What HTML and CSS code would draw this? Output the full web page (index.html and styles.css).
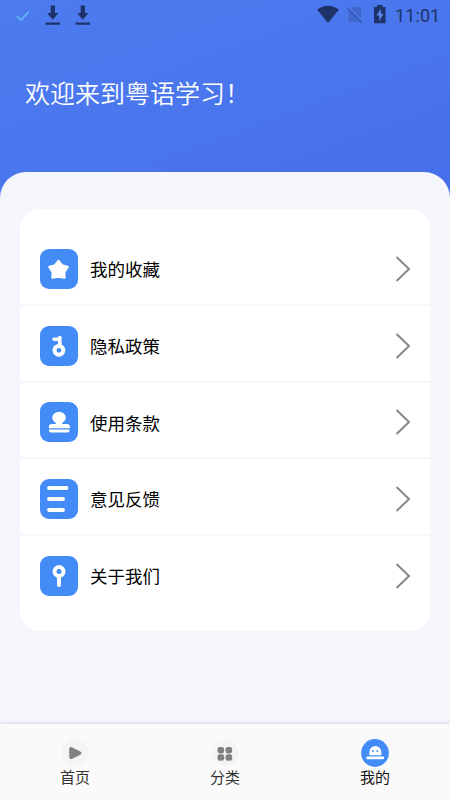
FILE: index.html
```html
<!DOCTYPE html>
<html lang="zh-CN">
<head>
<meta charset="utf-8">
<title>我的</title>
<link rel="stylesheet" href="styles.css">
</head>
<body>
<div class="app">
  <header class="hero">
    <div class="status">
      <svg class="status-left" width="100" height="30" viewBox="0 0 100 30">
        <path d="M17 16l4 4 8-8.500" fill="none" stroke="#62b8f5" stroke-width="1.700"/>
        <g fill="#1c3269">
          <path d="M50.700 5.500h4.300v7.500h3.500l-5.700 6.800-5.600-6.800h3.500zM45.500 22.500h14.500v2.200h-14.500z"/>
          <path d="M80.700 5.500h4.300v7.500h3.500l-5.700 6.800-5.600-6.800h3.500zM75.500 22.500h14.500v2.200h-14.500z"/>
        </g>
      </svg>
      <svg class="status-right" width="76" height="30" viewBox="314 0 76 30">
        <path d="M317 9.500Q328 1.800 339 9.500L328 23z" fill="#1c3269"/>
        <path d="M352.500 7H361v15H348.500V11z" fill="#3f66cb"/>
        <path d="M348.500 7l14 14" stroke="#4d7aee" stroke-width="1.500"/>
        <path d="M347 8l15 15" stroke="#3559b5" stroke-width="1.300"/>
        <path d="M374 7h3V5h5.500v2h3v16.300H374z" fill="#1c3269"/>
        <path d="M381 8.500l-4.500 7h2.700v5.500l4.300-7.300h-2.700z" fill="#5c86ee"/>
      </svg>
      <span class="clock">11:01</span>
    </div>
    <h1 class="greeting">欢迎来到粤语学习！</h1>
  </header>
  <main class="sheet">
    <ul class="menu">
      <li class="row">
        <svg class="icon" viewBox="0 0 38 40"><path d="M18.500 12l3.300 4.300 5.700 1.700-3.300 5 .3 5.500-6-1-6 1 .3-5.500-3.300-5 5.700-1.700z" fill="#fff" stroke="#fff" stroke-width="2.400" stroke-linejoin="round"/></svg>
        <span class="label">我的收藏</span>
        <svg class="chevron" viewBox="0 0 16 26"><path d="M1.500 1l12.500 12L1.500 25"/></svg>
      </li>
      <li class="row">
        <svg class="icon" viewBox="0 0 38 40"><g fill="none" stroke="#fff"><circle cx="18.900" cy="24.300" r="4.400" stroke-width="4"/><path d="M19.800 20v-8.500M20 13.300h-6" stroke-width="3.600" stroke-linecap="round"/></g></svg>
        <span class="label">隐私政策</span>
        <svg class="chevron" viewBox="0 0 16 26"><path d="M1.500 1l12.500 12L1.500 25"/></svg>
      </li>
      <li class="row">
        <svg class="icon" viewBox="0 0 38 40"><path d="M16 22c0-2-3.800-2.500-3.800-6.500a6.800 5.800 0 0 1 13.600 0c0 4-3.800 4.500-3.800 6.500h5a3 3 0 0 1 3 3v1.300H8.800V25a3 3 0 0 1 3-3zM9 27.500h20.500v1q0 2-2 2H11q-2 0-2-2z" fill="#fff"/></svg>
        <span class="label">使用条款</span>
        <svg class="chevron" viewBox="0 0 16 26"><path d="M1.500 1l12.500 12L1.500 25"/></svg>
      </li>
      <li class="row">
        <svg class="icon" viewBox="0 0 38 40"><path d="M9 9h17.500M9 20h14M9 31h14" stroke="#fff" stroke-width="3.900" stroke-linecap="round"/></svg>
        <span class="label">意见反馈</span>
        <svg class="chevron" viewBox="0 0 16 26"><path d="M1.500 1l12.500 12L1.500 25"/></svg>
      </li>
      <li class="row">
        <svg class="icon" viewBox="0 0 38 40"><g fill="none" stroke="#fff"><circle cx="19" cy="15.500" r="4.500" stroke-width="4"/><path d="M19 20v9" stroke-width="4" stroke-linecap="round"/></g></svg>
        <span class="label">关于我们</span>
        <svg class="chevron" viewBox="0 0 16 26"><path d="M1.500 1l12.500 12L1.500 25"/></svg>
      </li>
    </ul>
  </main>
  <nav class="tabs">
    <a class="tab">
      <svg width="28" height="28" viewBox="0 0 28 28"><circle cx="14" cy="14" r="13.500" fill="#f5f5f5"/><path d="M10 9.800v8.500l8.500-4.200z" fill="#808080" stroke="#808080" stroke-width="3.600" stroke-linejoin="round"/></svg>
      <span>首页</span>
    </a>
    <a class="tab">
      <svg width="28" height="28" viewBox="0 0 28 28"><circle cx="14" cy="14" r="13.500" fill="#f5f5f5"/><g fill="#808080"><rect x="6.500" y="8" width="6.700" height="6.500" rx="2.400"/><rect x="14.500" y="8" width="6.700" height="6.500" rx="2.400"/><rect x="6.500" y="15.300" width="6.700" height="6.500" rx="2.400"/><rect x="14.500" y="15.300" width="6.700" height="6.500" rx="2.400"/></g></svg>
      <span>分类</span>
    </a>
    <a class="tab active">
      <svg width="28" height="28" viewBox="0 0 28 28"><circle cx="14" cy="14" r="13.900" fill="#438cf7"/><path d="M8.300 16.200V13a6 5.900 0 0 1 12 0v3.200z" fill="#fff"/><rect x="5.300" y="17.500" width="17.800" height="2.800" rx="1.200" fill="#fff"/><circle cx="12" cy="12" r="1" fill="#438cf7"/><circle cx="16.300" cy="12" r="1" fill="#438cf7"/></svg>
      <span>我的</span>
    </a>
  </nav>
</div>
</body>
</html>
```
FILE: styles.css
```css
* { box-sizing: border-box; }

body {
  margin: 0;
  font-family: "Noto Sans CJK SC", sans-serif;
}

.app {
  display: flex;
  flex-direction: column;
  width: 450px;
  height: 800px;
  overflow: hidden;
  background: #f4f6fc;
}

.hero {
  flex: none;
  height: 204px;
  background: linear-gradient(160deg, #4d7cef 0%, #4a76ed 50%, #456dea 100%);
}

.status {
  display: flex;
  height: 30px;
}

.status-right { margin-left: 214px; }

.clock {
  margin-left: 5px;
  font: 400 18px/32px Roboto, sans-serif;
  letter-spacing: 0.1px;
  color: #1c3269;
}

.greeting {
  margin: 44px 0 0 25px;
  font-size: 25px;
  line-height: 36px;
  font-weight: 350;
  color: #fff;
}

.sheet {
  flex: 1;
  margin-top: -32px;
  padding: 37px 20px 0;
  border-radius: 26px 26px 0 0;
  background: #f4f6fc;
}

.menu {
  height: 422px;
  margin: 0;
  padding: 20.200px 0 0;
  list-style: none;
  border-radius: 20px;
  background: #fff;
}

.row {
  display: flex;
  align-items: center;
  height: 76.700px;
  padding: 4.600px 19px 0 20px;
  border-bottom: 2px solid #f6f7f9;
}

.row:last-child { border-bottom-color: transparent; }

.icon {
  width: 38px;
  height: 40px;
  border-radius: 9px;
  background: #438cf7;
}

.label {
  flex: 1;
  margin-left: 12px;
  padding-top: 1px;
  font-size: 17.500px;
  line-height: 26px;
  font-weight: 400;
  color: #000;
}

.chevron {
  width: 16px;
  height: 26px;
  fill: none;
  stroke: #888;
  stroke-width: 2;
}

.tabs {
  display: flex;
  flex: none;
  height: 76px;
  padding-top: 15px;
  background: #fafafa;
  box-shadow: 0 -1px 3px rgba(0, 0, 0, 0.12);
}

.tab {
  display: flex;
  flex: 1;
  flex-direction: column;
  align-items: center;
  font-size: 15px;
  line-height: 20px;
  color: #333;
}

.active { color: #111; }
```
